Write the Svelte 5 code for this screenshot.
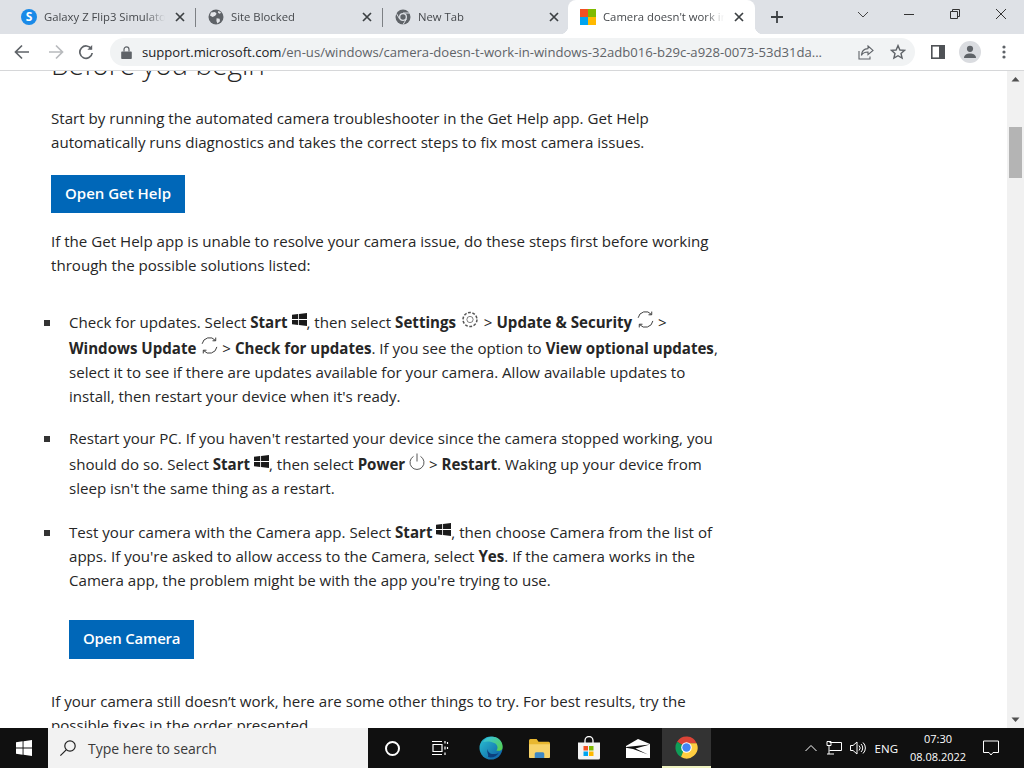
<script>
  const tabs = [
    { title: 'Galaxy Z Flip3 Simulator', icon: 'skype' },
    { title: 'Site Blocked', icon: 'globe' },
    { title: 'New Tab', icon: 'chrome' },
    { title: "Camera doesn't work in Windows", icon: 'ms', active: true }
  ];
  const msColors = ['#f25022', '#7fba00', '#00a4ef', '#ffb900'];
</script>

{#snippet winLogo(w, h, fill, cls)}
  <svg class={cls} width={w} height={h} viewBox="0 0 16 16" fill={fill} preserveAspectRatio="none">
    <path d="M0 2.300 6.600 1.300V7.500H0zM7.500 1.200 16 0V7.500H7.500zM0 8.500H6.600V14.700L0 13.700zM7.500 8.500H16V16L7.500 14.800z" />
  </svg>
{/snippet}

{#snippet syncIcon()}
  <svg class="inl sync" width="17" height="17" viewBox="1 1 18 18" fill="none" stroke="#333" stroke-width="1">
    <path d="M2.200 8.200A8 8 0 0 1 16.200 4.600" />
    <path d="M17.800 11.500A8 8 0 0 1 3.800 15.400" />
    <path d="M16.600 1.600V5H13.200M3.400 18.400V15H6.800" />
  </svg>
{/snippet}

{#snippet gearIcon()}
  <svg class="inl gear" width="18" height="17" viewBox="0 0 18 18" fill="none" stroke="#555" stroke-width="0.8">
    <circle cx="9" cy="9" r="3.300" />
    <circle cx="9" cy="9" r="7.400" stroke-width="1.600" stroke-dasharray="3 1.650" />
  </svg>
{/snippet}

{#snippet powerIcon()}
  <svg class="inl" width="16" height="17" viewBox="0 0 16 17" fill="none" stroke="#444" stroke-width="0.9">
    <path d="M4.500 3.400a7 7 0 1 0 7 0" />
    <path d="M8 .5v8" />
  </svg>
{/snippet}

{#snippet favicon(kind)}
  {#if kind === 'skype'}
    <span class="fav-skype">S</span>
  {:else if kind === 'globe'}
    <svg width="16" height="16" viewBox="0 0 16 16">
      <circle cx="8" cy="8" r="7.500" fill="#5f6368" />
      <path d="M3 3.600 7 3l1.600 1.800-1.400 2L4.600 8 2 6.400zM8.600 9.200l3 .6.4 2.400-2.600 2.400-1-2.600zM10.400 1.800l2.800 2-1.600 1-1.600-1z" fill="#e4e6ea" />
    </svg>
  {:else if kind === 'chrome'}
    <svg width="16" height="16" viewBox="0 0 16 16">
      <circle cx="8" cy="8" r="7.500" fill="#5f6368" />
      <circle cx="8" cy="8" r="4" fill="#dee1e6" />
      <circle cx="8" cy="8" r="2.700" fill="#5f6368" />
      <path d="M8 4h6.800" stroke="#dee1e6" stroke-width="1" />
      <path d="M4.600 10 1.400 4.400M11.400 10 8 15.600" stroke="#dee1e6" stroke-width="1" />
    </svg>
  {:else}
    <span class="fav-ms">
      {#each msColors as color}
        <i style="background: {color}"></i>
      {/each}
    </span>
  {/if}
{/snippet}

<div class="screen">
  <header class="tabstrip">
    {#each tabs as tab, i}
      <div class="tab" class:active={tab.active} class:sep={i < 2}>
        {@render favicon(tab.icon)}
        <span class="tab-title">{tab.title}</span>
        <svg class="tab-close" width="10" height="10" viewBox="0 0 10 10" stroke="#3c4043" stroke-width="1.700">
          <path d="M1 1l8 8M9 1l-8 8" />
        </svg>
      </div>
    {/each}
    <svg class="newtab" width="14" height="14" viewBox="0 0 14 14" stroke="#3c4043" stroke-width="1.800">
      <path d="M7 1v12M1 7h12" />
    </svg>
    <div class="wincontrols">
      <svg width="46" height="14" viewBox="0 0 46 14" fill="none" stroke="#444" stroke-width="1">
        <path d="M18 5l5 5 5-5" />
      </svg>
      <svg width="46" height="14" viewBox="0 0 46 14" fill="none" stroke="#333" stroke-width="1">
        <path d="M18 7.500h10" />
      </svg>
      <svg width="46" height="14" viewBox="0 0 46 14" fill="none" stroke="#333" stroke-width="1">
        <path d="M18.500 4.500h7v7h-7zM20.500 4.500v-2h7v7h-2" />
      </svg>
      <svg width="46" height="14" viewBox="0 0 46 14" fill="none" stroke="#333" stroke-width="1">
        <path d="M18 2l10 10M28 2l-10 10" />
      </svg>
    </div>
  </header>

  <nav class="toolbar">
    <svg class="tool-back" width="16" height="16" viewBox="0 0 16 16" fill="none" stroke="#5f6368" stroke-width="1.700">
      <path d="M15 8H2M8 1.500 1.500 8 8 14.500" />
    </svg>
    <svg class="tool-fwd" width="16" height="16" viewBox="0 0 16 16" fill="none" stroke="#b8babd" stroke-width="1.700">
      <path d="M1 8h13M8 1.500 14.500 8 8 14.500" />
    </svg>
    <svg class="tool-reload" width="16" height="16" viewBox="0 0 16 16" fill="none" stroke="#5f6368" stroke-width="1.700">
      <path d="M13.400 5A6.200 6.200 0 1 0 14.200 9" />
      <path d="M14.200 1v4.800H9.400" fill="#5f6368" stroke="none" />
    </svg>
    <div class="omnibox">
      <svg width="11" height="13" viewBox="0 0 11 13" fill="#5f6368">
        <path d="M1 5.400h9a.8.8 0 0 1 .8.8v6a.8.8 0 0 1-.8.8H1a.8.8 0 0 1-.8-.8v-6A.8.8 0 0 1 1 5.400z" />
        <path d="M3 5.600V3.400a2.500 2.500 0 0 1 5 0v2.200" fill="none" stroke="#5f6368" stroke-width="1.200" />
      </svg>
      <span class="url"><b>support.microsoft.com</b>/en-us/windows/camera-doesn-t-work-in-windows-32adb016-b29c-a928-0073-53d31da...</span>
      <svg class="share" width="16" height="15" viewBox="0 0 16 15" fill="none" stroke="#5f6368" stroke-width="1.100">
        <path d="M10 1l5 4.400-5 4.200V7C6.500 7 4.600 8 3.400 10.400 3.600 6.600 6 3.800 10 3.600z" />
        <path d="M1 6v8h11v-2.500" />
      </svg>
      <svg class="star" width="16" height="16" viewBox="0 0 16 16" fill="none" stroke="#5f6368" stroke-width="1.400">
        <path d="M8 1.600 9.900 6l4.700.4-3.600 3.100 1.100 4.600L8 11.700l-4.100 2.400L5 9.500 1.400 6.400 6.100 6z" />
      </svg>
    </div>
    <svg class="sidepanel" width="14" height="14" viewBox="0 0 14 14">
      <path d="M0 0h14v14H0z" fill="#4f5256" />
      <path d="M1.600 1.600h6.400v10.800H1.600z" fill="#fff" />
    </svg>
    <span class="avatar">
      <svg width="14" height="14" viewBox="0 0 14 14" fill="#5f6368">
        <circle cx="7" cy="3.800" r="3.100" />
        <path d="M1 13c0-3 3-4.400 6-4.400s6 1.400 6 4.400z" />
      </svg>
    </span>
    <svg class="menu" width="4" height="14" viewBox="0 0 4 14" fill="#5f6368">
      <circle cx="2" cy="2" r="1.600" /><circle cx="2" cy="7" r="1.600" /><circle cx="2" cy="12" r="1.600" />
    </svg>
  </nav>

  <div class="viewport">
    <main class="page">
      <h2>Before you begin</h2>
      <p>Start by running the automated camera troubleshooter in the Get Help app. Get Help automatically runs diagnostics and takes the correct steps to fix most camera issues.</p>
      <a class="btn first" href="#get-help">Open Get Help</a>
      <p class="after-btn">If the Get Help app is unable to resolve your camera issue, do these steps first before working through the possible solutions listed:</p>
      <ul>
        <li>Check for updates. Select <b>Start</b> {@render winLogo(15, 13, '#1a1a1a', 'winlogo')}, then select <b>Settings</b> {@render gearIcon()} &gt; <b>Update &amp; Security</b> {@render syncIcon()} &gt; <b>Windows Update</b> {@render syncIcon()} &gt; <b>Check for updates</b>. If you see the option to <b>View optional updates</b>, select it to see if there are updates available for your camera. Allow available updates to install, then restart your device when it's ready.</li>
        <li>Restart your PC. If you haven't restarted your device since the camera stopped working, you should do so. Select <b>Start</b> {@render winLogo(15, 13, '#1a1a1a', 'winlogo')}, then select <b>Power</b> {@render powerIcon()} &gt; <b>Restart</b>. Waking up your device from sleep isn't the same thing as a restart.</li>
        <li>Test your camera with the Camera app. Select <b>Start</b> {@render winLogo(15, 13, '#1a1a1a', 'winlogo')}, then choose Camera from the list of apps. If you're asked to allow access to the Camera, select <b>Yes</b>. If the camera works in the Camera app, the problem might be with the app you're trying to use.</li>
      </ul>
      <a class="btn second" href="#camera">Open Camera</a>
      <p class="last">If your camera still doesn’t work, here are some other things to try. For best results, try the possible fixes in the order presented.</p>
    </main>
    <aside class="scrollbar">
      <svg width="17" height="17" viewBox="0 0 17 17"><path d="M4.500 10.500 8.500 6l4 4.500z" fill="#505050" /></svg>
      <div class="track"><div class="thumb"></div></div>
      <svg width="17" height="17" viewBox="0 0 17 17"><path d="M4.500 6.500 8.500 11l4-4.500z" fill="#505050" /></svg>
    </aside>
  </div>

  <footer class="taskbar">
    <div class="start">{@render winLogo(16, 16, '#fff', '')}</div>
    <div class="search">
      <svg width="18" height="18" viewBox="0 0 18 18" fill="none" stroke="#222" stroke-width="1.200">
        <circle cx="11" cy="7" r="5.200" />
        <path d="M7.200 10.800 1.400 16.600" />
      </svg>
      <span>Type here to search</span>
    </div>
    <div class="apps">
      <div class="app narrow"><span class="cortana"></span></div>
      <div class="app narrow">
        <svg width="18" height="16" viewBox="0 0 18 16" fill="none" stroke="#fff" stroke-width="1.200">
          <path d="M1 1.500h10M1 14.500h10M2 4.500h9v7H2zM14 1v2.600M14 6.500v3M14 12.500V15" />
          <path d="M16.500 2v2M16.500 7v2" />
        </svg>
      </div>
      <div class="app edge">
        <svg width="24" height="24" viewBox="0 0 24 24">
          <defs>
            <linearGradient id="edge-a" x1="0" y1="0" x2="1" y2="1">
              <stop offset="0" stop-color="#2bc3d2" /><stop offset="1" stop-color="#0c59a4" />
            </linearGradient>
            <linearGradient id="edge-b" x1="0" y1="0" x2="1" y2="1">
              <stop offset="0" stop-color="#34c1ed" /><stop offset="1" stop-color="#5ad33f" />
            </linearGradient>
          </defs>
          <circle cx="12" cy="12" r="11.500" fill="url(#edge-a)" />
          <path d="M4 6C7 .8 15-1 20 3c3 2.600 4 6 3.400 9.400-.4 2-3 2.800-6 2.200 1.600-1.600 1.600-5-1-7C12.600 5 7 5 4 6z" fill="url(#edge-b)" />
          <path d="M8.500 13c0 3 3 5.400 6.500 5 2 0 4-.4 5-1.600-2 4-7 6-11 4.600C10 19 7.500 16 8.500 13z" fill="#0c3f7d" />
        </svg>
      </div>
      <div class="app">
        <svg width="21" height="19" viewBox="0 0 22 18" preserveAspectRatio="none">
          <path d="M0 1.500A1.500 1.500 0 0 1 1.500 0H8l2 2.500h10.500A1.500 1.500 0 0 1 22 4v12.500a1.500 1.500 0 0 1-1.500 1.500h-19A1.500 1.500 0 0 1 0 16.500z" fill="#e8b730" />
          <path d="M0 5h22v11.500a1.500 1.500 0 0 1-1.500 1.500h-19A1.500 1.500 0 0 1 0 16.500z" fill="#f7d36a" />
          <path d="M6 18v-4a1.500 1.500 0 0 1 1.500-1.500h7A1.500 1.500 0 0 1 16 14v4z" fill="#3e88c5" />
        </svg>
      </div>
      <div class="app">
        <svg width="24" height="24" viewBox="0 0 24 24">
          <path d="M8 7V4.500a4 4 0 0 1 8 0V7" fill="none" stroke="#fff" stroke-width="1.300" />
          <path d="M1 6.500h22v15.500a1.500 1.500 0 0 1-1.500 1.500h-19A1.500 1.500 0 0 1 1 22z" fill="#f4f4f4" />
          <path d="M6.500 10H11v4.500H6.500z" fill="#f25022" />
          <path d="M12 10h4.500v4.500H12z" fill="#7fba00" />
          <path d="M6.500 15.500H11V20H6.500z" fill="#00a4ef" />
          <path d="M12 15.500h4.500V20H12z" fill="#ffb900" />
        </svg>
      </div>
      <div class="app">
        <svg width="24" height="19" viewBox="0 0 24 19">
          <path d="M0 7 12 0l12 5v14H0z" fill="#fff" />
          <path d="M0 8 24 5.400 9.500 9.400 22 15.500 7 10 0 8.800z" fill="#101010" />
        </svg>
      </div>
      <div class="app current">
        <svg width="23" height="23" viewBox="0 0 24 24">
          <path d="M12 12 2.200 6A11.500 11.500 0 0 1 22.600 7.500H12z" fill="#db4437" />
          <path d="M12 12 6.300 22A11.500 11.500 0 0 1 2.200 6z" fill="#0f9d58" />
          <path d="M12 7.500h10.600A11.500 11.500 0 0 1 6.300 22z" fill="#ffcd40" />
          <circle cx="12" cy="12" r="5.500" fill="#fff" />
          <circle cx="12" cy="12" r="4.400" fill="#4285f4" />
        </svg>
      </div>
    </div>
    <div class="tray">
      <svg width="14" height="8" viewBox="0 0 14 8" fill="none" stroke="#fff" stroke-width="1">
        <path d="M1.500 7 7 1.500 12.500 7" />
      </svg>
      <svg class="tray-net" width="16" height="14" viewBox="0 0 16 14" fill="none" stroke="#fff" stroke-width="1">
        <path d="M3.500 1.500h12V9.500H3.500M1 .5h4v4H1zM3 4.500V13M1 13h7" />
      </svg>
      <svg class="tray-vol" width="16" height="14" viewBox="0 0 16 14" fill="none" stroke="#fff" stroke-width="1">
        <path d="M.5 4.500H3L7 1v12L3 9.500H.5z" />
        <path d="M9 4.500a3.500 3.500 0 0 1 0 5M11 3a5.500 5.500 0 0 1 0 8M13 1.500a7.500 7.500 0 0 1 0 11" />
      </svg>
      <span class="lang">ENG</span>
      <div class="clock"><span>07:30</span><span>08.08.2022</span></div>
      <svg class="notif" width="16" height="16" viewBox="0 0 16 16" fill="none" stroke="#fff" stroke-width="1">
        <path d="M.5 1h15v11.500H10l-2 2.500-2-2.500H.5z" />
      </svg>
    </div>
  </footer>
</div>

<style>
  :global(body) {
    margin: 0;
    background: #fff;
  }
  .screen {
    width: 1024px;
    height: 768px;
    display: flex;
    flex-direction: column;
    overflow: hidden;
    font-family: 'Open Sans', 'Noto Sans', sans-serif;
    color: #262626;
  }

  /* tab strip */
  .tabstrip {
    height: 34px;
    flex: none;
    display: flex;
    align-items: center;
    padding-left: 9px;
    background: #dee1e6;
  }
  .tab {
    box-sizing: border-box;
    width: 187px;
    height: 34px;
    display: flex;
    align-items: center;
    gap: 7px;
    padding: 0 11px 0 12px;
    position: relative;
    font-size: 11.300px;
    color: #45484c;
  }
  .tab.sep::after {
    content: '';
    position: absolute;
    right: 0;
    top: 8px;
    height: 19px;
    width: 1px;
    background: #7d8084;
  }
  .tab.active {
    margin-left: -2px;
    background: #fff;
    border-radius: 8px 8px 0 0;
  }
  /* outward curves at the foot of the active tab */
  .tab.active::before,
  .tab.active::after {
    content: '';
    position: absolute;
    bottom: 0;
    width: 8px;
    height: 8px;
  }
  .tab.active::before {
    left: -8px;
    background: radial-gradient(circle at 0 0, transparent 8px, #fff 8.500px);
  }
  .tab.active::after {
    right: -8px;
    background: radial-gradient(circle at 100% 0, transparent 8px, #fff 8.500px);
  }
  .tab-title {
    flex: 1;
    margin-top: -2px;
    white-space: nowrap;
    overflow: hidden;
    -webkit-mask-image: linear-gradient(to right, #000 84%, transparent 100%);
    mask-image: linear-gradient(to right, #000 84%, transparent 100%);
  }
  .tab-close {
    flex: none;
    margin-left: 3px;
  }
  .fav-skype {
    flex: none;
    width: 16px;
    height: 16px;
    border-radius: 50%;
    background: #1a8ae8;
    color: #fff;
    font-size: 12px;
    font-weight: 700;
    line-height: 16px;
    text-align: center;
  }
  .fav-ms {
    flex: none;
    width: 16px;
    height: 16px;
    display: grid;
    grid-template-columns: 1fr 1fr;
    grid-template-rows: 1fr 1fr;
  }
  .newtab {
    margin-left: 15px;
  }
  .wincontrols {
    margin-left: auto;
    display: flex;
    margin-top: -6px;
  }

  /* toolbar */
  .toolbar {
    box-sizing: border-box;
    height: 37px;
    flex: none;
    display: flex;
    align-items: center;
    padding-left: 14px;
    background: #fff;
    border-bottom: 1px solid #d6d7d9;
  }
  .tool-fwd {
    margin-left: 18px;
  }
  .tool-reload {
    margin-left: 14px;
  }
  .omnibox {
    box-sizing: border-box;
    width: 805px;
    height: 28px;
    margin-left: 16px;
    display: flex;
    align-items: center;
    padding: 0 9px 0 11px;
    border-radius: 14px;
    background: #f1f3f4;
    font-size: 13.100px;
  }
  .url {
    width: 716px;
    margin-left: 10px;
    flex: none;
    white-space: nowrap;
    overflow: hidden;
    color: #5f6368;
  }
  .url b {
    font-weight: 400;
    color: #202124;
  }
  .star {
    margin-left: 16px;
  }
  .sidepanel {
    margin-left: 16px;
  }
  .avatar {
    width: 22px;
    height: 22px;
    margin-left: 14px;
    border-radius: 50%;
    background: #dadce0;
    display: flex;
    align-items: center;
    justify-content: center;
  }
  .menu {
    margin-left: 21px;
  }

  /* page */
  .viewport {
    flex: 1;
    min-height: 0;
    display: flex;
    overflow: hidden;
  }
  .page {
    flex: 1;
    overflow: hidden;
    box-sizing: border-box;
    padding: 0 281px 0 51px;
    font-size: 15.100px;
    line-height: 24px;
  }
  h2 {
    margin: -25px 0 24px;
    font-size: 28px;
    font-weight: 300;
    line-height: 36px;
  }
  p {
    margin: 0;
  }
  .btn {
    display: inline-block;
    padding: 0 14px;
    height: 38px;
    line-height: 37px;
    background: #0067b8;
    color: #fff;
    font-size: 15px;
    font-weight: 600;
    text-decoration: none;
  }
  .btn.first {
    margin-top: 21px;
  }
  .after-btn {
    margin-top: 16px;
  }
  ul {
    list-style: none;
    margin: 31px 0 0;
    padding: 0 0 0 18px;
  }
  li {
    position: relative;
    margin-bottom: 18px;
  }
  li::before {
    content: '';
    position: absolute;
    left: -25px;
    top: 12px;
    width: 6px;
    height: 6px;
    background: #333;
  }
  li:nth-child(2)::before {
    top: 10px;
  }
  li b {
    font-weight: 700;
  }
  /* padding makes these lines a bit taller than the plain ones */
  .inl {
    padding-top: 3px;
    vertical-align: 0;
  }
  .gear {
    margin-left: 1px;
    margin-right: 1px;
  }
  .sync {
    margin-left: 1px;
  }
  .winlogo {
    padding-top: 5px;
    vertical-align: 2px;
  }
  .btn.second {
    margin: 10px 0 0 18px;
    height: 39px;
    letter-spacing: -0.200px;
  }
  .last {
    margin-top: 30px;
  }

  /* scrollbar */
  .scrollbar {
    width: 17px;
    flex: none;
    display: flex;
    flex-direction: column;
    background: #f1f1f1;
  }
  .track {
    flex: 1;
    padding: 39px 2px 0;
  }
  .thumb {
    height: 51px;
    background: #b4b4b4;
  }

  /* taskbar */
  .taskbar {
    height: 40px;
    flex: none;
    display: flex;
    align-items: center;
    background: #101010;
    color: #fff;
  }
  .start {
    width: 48px;
    display: flex;
    justify-content: center;
  }
  .search {
    box-sizing: border-box;
    width: 320px;
    height: 40px;
    display: flex;
    align-items: center;
    gap: 11px;
    padding-left: 11px;
    background: #f2f2f2;
    color: #3a3a3a;
    font-size: 14px;
  }
  .apps {
    display: flex;
    height: 40px;
  }
  .app {
    width: 49px;
    height: 40px;
    display: flex;
    align-items: center;
    justify-content: center;
  }
  .app.narrow {
    width: 48px;
  }
  .app.edge {
    margin-left: 2px;
  }
  .app.current {
    box-sizing: border-box;
    background: #333;
    border-bottom: 2px solid #eef2c0;
  }
  .cortana {
    box-sizing: border-box;
    width: 15px;
    height: 15px;
    border: 2px solid #fff;
    border-radius: 50%;
  }
  .tray {
    margin-left: auto;
    display: flex;
    align-items: center;
    padding-right: 25px;
    font-size: 12px;
  }
  .tray-net {
    margin-left: 8px;
  }
  .tray-vol {
    margin-left: 8px;
  }
  .lang {
    margin-left: 9px;
    font-size: 11.500px;
  }
  .clock {
    width: 54px;
    margin-left: 13px;
    display: flex;
    flex-direction: column;
    align-items: center;
    font-size: 11px;
    line-height: 18px;
    white-space: nowrap;
  }
  .notif {
    margin-left: 18px;
  }
</style>
